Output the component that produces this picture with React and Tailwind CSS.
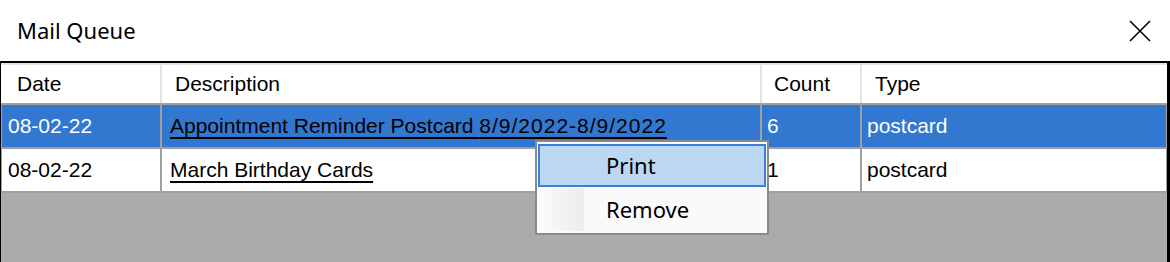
export default function App() {
  const rows = [
    { date: '08-02-22', desc: 'Appointment Reminder Postcard ', range: '8/9/2022-8/9/2022', count: '6', type: 'postcard', selected: true },
    { date: '08-02-22', desc: 'March Birthday Cards', range: '', count: '1', type: 'postcard', selected: false },
  ]

  return (
    <div className="w-[1170px] h-[262px] bg-white overflow-hidden flex flex-col">
      {/* Title bar */}
      <div className="h-[61px] shrink-0 flex items-center justify-between pl-[17px] pr-[19px]">
        <span className="text-[22px] text-black font-['Noto_Sans',sans-serif]">Mail Queue</span>
        <svg width="22" height="22" viewBox="0 0 22 22" className="mt-[1px]">
          <path d="M1 1 L21 21 M21 1 L1 21" stroke="#000" strokeWidth="1.6" fill="none" />
        </svg>
      </div>

      {/* Grid */}
      <div className="flex-1 relative bg-[#ababab] border-t-2 border-l border-r-[3px] border-black font-['Liberation_Sans',Arial,sans-serif] text-[21px]">
        {/* Header */}
        <div className="flex h-[42px] bg-white border-t-2 border-t-[#e3e3e3] border-b-2 border-b-[#a0a0a0] text-black">
          <div className="w-[161px] border-r-2 border-[#e3e3e3] flex items-center pl-[16px]">Date</div>
          <div className="w-[600px] border-r-2 border-[#e3e3e3] flex items-center pl-[13px]">Description</div>
          <div className="w-[100px] border-r-2 border-[#e3e3e3] flex items-center pl-[12px]">Count</div>
          <div className="flex-1 flex items-center pl-[13px]">Type</div>
        </div>

        {rows.map((r, i) => (
          <div
            key={i}
            className={`flex h-[44px] border-b-2 border-[#a0a0a0] ${r.selected ? 'bg-[#3277d0] text-white' : 'bg-white text-black'}`}
          >
            <div className="w-[161px] border-r-2 border-l border-[#a0a0a0] flex items-center pl-[6px]">{r.date}</div>
            <div className="w-[600px] border-r-2 border-[#a0a0a0] flex items-center pl-[8px]">
              <span className="text-black underline decoration-2 underline-offset-[4px] whitespace-pre">
                {r.desc}
                {r.range && <span className="tracking-[1px]">{r.range}</span>}
              </span>
            </div>
            <div className="w-[100px] border-r-2 border-[#a0a0a0] flex items-center pl-[5px]">{r.count}</div>
            <div className="flex-1 border-r border-[#a0a0a0] flex items-center pl-[5px]">{r.type}</div>
          </div>
        ))}

        {/* Context menu */}
        <div className="absolute left-[534px] top-[77px] w-[234px] h-[95px] bg-[#fafafa] border-2 border-[#8a8a8a] py-[2px] px-[1px] flex flex-col gap-[1px] font-['Noto_Sans',sans-serif] text-[22px] text-black">
          <div className="h-[43px] flex items-center bg-[#bcd7f1] border-2 border-[#3a80d8]">
            <div className="w-[46px] self-stretch" />
            <span className="pl-[20px]">Print</span>
          </div>
          <div className="h-[43px] flex items-center border-2 border-transparent">
            <div className="w-[46px] self-stretch -ml-[2px] -my-[2px] bg-gradient-to-r from-[#fbfbfb] to-[#ececec]" />
            <span className="pl-[22px]">Remove</span>
          </div>
        </div>
      </div>
    </div>
  )
}
